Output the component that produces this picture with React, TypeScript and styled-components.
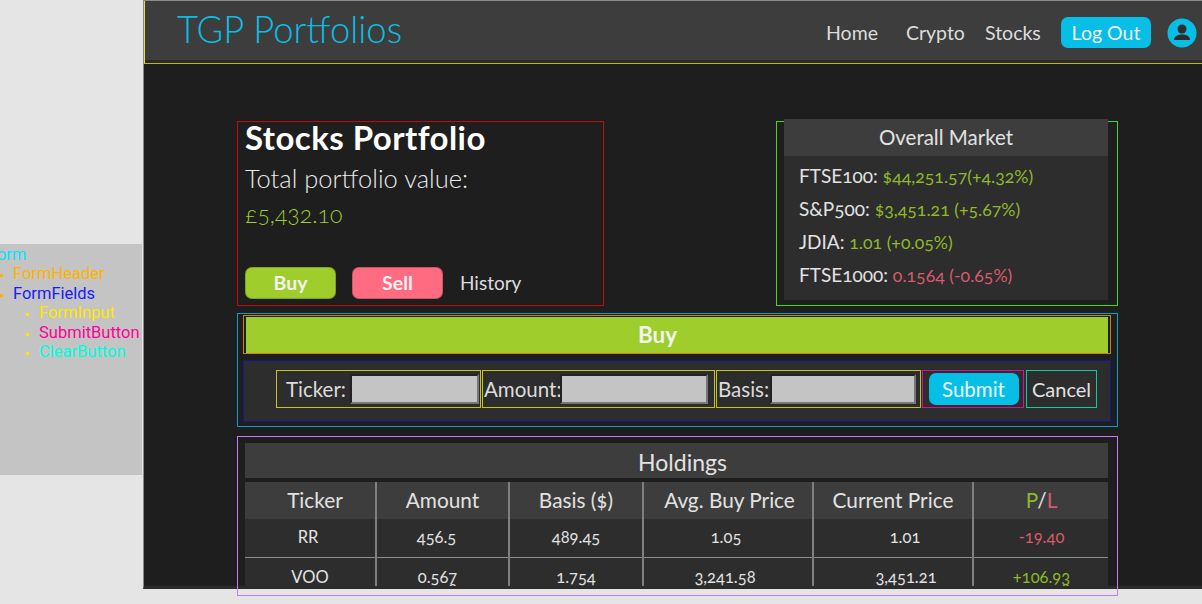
import React from "react";
import styled, { createGlobalStyle } from "styled-components";

const GREEN = "#9fce2c";
const RED = "#ff6b81";
const BLUE = "#07bfe6";
const FONT = `Lato, "Open Sans", sans-serif`;

const GlobalStyle = createGlobalStyle`
  html, body {
    margin: 0;
    padding: 0;
    height: 604px;
    overflow: hidden;
    background: #e5e5e5;
  }
`;

const Page = styled.div`
  display: flex;
  align-items: flex-start;
  width: 1202px;
  height: 604px;
  overflow: hidden;
  font-family: ${FONT};
  font-variant-numeric: oldstyle-nums;
  color: #e8e8e8;
`;

const Legend = styled.aside`
  flex: 0 0 142px;
  height: 231px;
  box-sizing: border-box;
  margin-top: 244px;
  margin-right: 1px;
  padding-top: 1px;
  background: #c4c4c4;
  overflow: hidden;
  font-family: Roboto, sans-serif;
  font-size: 16.5px;
  line-height: 19.4px;
`;

const LegendRoot = styled.div<{ $color: string }>`
  margin-left: -12px;
  color: ${(p) => p.$color};
`;

const LegendList = styled.ul<{ $indent: number }>`
  margin: 0;
  padding: 0 0 0 ${(p) => p.$indent}px;
  list-style: square;
`;

const LegendItem = styled.li<{ $color: string; $marker: string }>`
  color: ${(p) => p.$color};
  &::marker {
    color: ${(p) => p.$marker};
    font-size: 10px;
  }
`;

const Window = styled.div`
  flex: 0 0 1059px;
  height: 589px;
  box-sizing: border-box;
  background: #1e1e1e;
  border-left: 1px solid #8a8a8a;
  border-top: 1px solid #8a8a8a;
  border-bottom: 3px solid #2b2b2b;
`;

const NavBar = styled.header`
  display: flex;
  align-items: center;
  height: 63px;
  box-sizing: border-box;
  padding-left: 32px;
  background: #3d3d3d;
  border-left: 1px solid #e0e04a;
  border-bottom: 1px solid #b8b820;
  box-shadow: inset 0 -3px 0 #2b2b2b;
`;

const Logo = styled.h1`
  flex: 1;
  margin: -6px 0 0;
  font-size: 36.4px;
  font-weight: 300;
  color: ${BLUE};
`;

const NavLink = styled.a<{ $width: number }>`
  width: ${(p) => p.$width}px;
  font-size: 19.5px;
  color: #dcdcdc;
`;

const LogOutButton = styled.button`
  width: 90px;
  height: 31px;
  margin: 0 16px 0 0;
  padding: 0;
  border: 0;
  border-radius: 7px;
  background: ${BLUE};
  color: #f0f0f0;
  font-family: ${FONT};
  font-size: 19.5px;
`;

const AvatarBox = styled.svg`
  width: 30px;
  height: 30px;
  margin: 2px 5px 0 0;
`;

const Main = styled.main`
  display: flex;
  flex-direction: column;
  width: 881px;
  margin: 57px 0 0 93px;
`;

const TopRow = styled.div`
  display: flex;
  justify-content: space-between;
  height: 185px;
  margin-bottom: 7px;
`;

const SummaryPanel = styled.section`
  width: 367px;
  box-sizing: border-box;
  padding: 0 7px;
  border: 1px solid #c00c0c;
`;

const Title = styled.h2`
  margin: -1px 0 0;
  font-size: 33px;
  letter-spacing: 0.45px;
  line-height: 32px;
  font-weight: 700;
  color: #fff;
`;

const TotalLabel = styled.div`
  margin-top: 9px;
  font-size: 25.5px;
  font-weight: 300;
  line-height: 32px;
  color: #eaeaea;
`;

const TotalValue = styled.div`
  margin-top: 4px;
  font-size: 23px;
  font-weight: 300;
  line-height: 32px;
  color: ${GREEN};
`;

const ActionRow = styled.div`
  display: flex;
  align-items: center;
  margin-top: 37px;
`;

const ActionButton = styled.button<{ $bg: string }>`
  width: 91px;
  height: 32px;
  margin-right: 16px;
  padding: 0 0 2px;
  border: 1px solid rgba(0, 0, 0, 0.2);
  border-radius: 7px;
  background: ${(p) => p.$bg};
  color: #f2f2f2;
  font-family: ${FONT};
  font-size: 19.5px;
  font-weight: 700;
`;

const HistoryLink = styled.a`
  margin: -1px 0 0 1px;
  font-size: 19px;
  color: #dcdcdc;
`;

const MarketOutline = styled.section`
  width: 342px;
  box-sizing: border-box;
  padding: 0 9px 4px 7px;
  border: 1px solid #3fdc10;
`;

const MarketCard = styled.div`
  height: 181px;
  margin-top: -3px;
  background: #2d2d2d;
`;

const CardHeading = styled.div<{ $height: number; $line: number; $size: number; $indent?: number }>`
  height: ${(p) => p.$height}px;
  padding-left: ${(p) => p.$indent ?? 0}px;
  line-height: ${(p) => p.$line}px;
  background: #3d3d3d;
  text-align: center;
  font-size: ${(p) => p.$size}px;
  color: #e2e2e2;
`;

const MarketList = styled.div`
  padding: 3px 0 0 15px;
`;

const MarketRow = styled.div`
  height: 33px;
  line-height: 33px;
  font-size: 19px;
  color: #e2e2e2;
`;

const Gain = styled.span`
  color: #8fb82a;
`;

const Loss = styled.span`
  color: #d95a6d;
`;

const MarketGain = styled(Gain)`
  font-size: 17.7px;
`;

const MarketLoss = styled(Loss)`
  font-size: 17.7px;
`;

const FormOutline = styled.section`
  height: 114px;
  box-sizing: border-box;
  padding: 1px 6px 4px 5px;
  border: 1px solid #0a9fc9;
`;

const FormHeader = styled.div`
  box-sizing: border-box;
  height: 39px;
  margin-bottom: 6px;
  border: 1px solid #c9850a;
  padding: 1px 2px 0;
`;

const FormTitle = styled.div`
  height: 36px;
  padding-right: 39px;
  line-height: 36px;
  background: ${GREEN};
  text-align: center;
  font-size: 22.5px;
  font-weight: 700;
  color: #f2f2f2;
`;

const FormFields = styled.div`
  display: flex;
  align-items: flex-start;
  height: 62px;
  box-sizing: border-box;
  padding: 9px 0 0 32px;
  gap: 1px;
  border: 1px solid #15159c;
  background: #2d2d2d;
`;

const FormInput = styled.label<{ $width: number; $pad: number }>`
  display: flex;
  align-items: center;
  width: ${(p) => p.$width}px;
  height: 38px;
  box-sizing: border-box;
  padding-left: ${(p) => p.$pad}px;
  border: 1px solid #c4c41a;
  font-size: 20.5px;
  color: #dcdcdc;
`;

const TextBox = styled.input<{ $width: number; $gap: number }>`
  width: ${(p) => p.$width}px;
  height: 30px;
  box-sizing: border-box;
  margin-left: ${(p) => p.$gap}px;
  padding: 0;
  background: #c4c4c4;
  border: 2px inset #777;
`;

const SubmitBox = styled.div`
  display: flex;
  align-items: center;
  justify-content: center;
  width: 102px;
  height: 38px;
  box-sizing: border-box;
  padding-left: 1px;
  border: 1px solid #d40fa6;
`;

const SubmitButton = styled.button`
  width: 90px;
  height: 32px;
  padding: 0;
  border: 0;
  border-radius: 7px;
  background: ${BLUE};
  color: #eaf8fc;
  font-family: ${FONT};
  font-size: 20.5px;
`;

const ClearButton = styled.button`
  width: 71px;
  height: 38px;
  margin-left: 1px;
  padding: 0;
  box-sizing: border-box;
  background: transparent;
  border: 1px solid #10c99c;
  color: #e2e2e2;
  font-family: ${FONT};
  font-size: 20px;
`;

const HoldingsOutline = styled.section`
  height: 160px;
  box-sizing: border-box;
  margin-top: 9px;
  padding: 6px 9px 0 7px;
  border: 1px solid #c07ff0;
`;

const TableClip = styled.div`
  height: 108px;
  overflow: hidden;
`;

const Holdings = styled.table`
  width: 864px;
  margin-top: 4px;
  border-collapse: collapse;
  table-layout: fixed;
  text-align: center;
  color: #e2e2e2;
`;

const HeadCell = styled.th<{ $width: number; $shift?: number }>`
  width: ${(p) => p.$width}px;
  height: 35px;
  padding: 0 0 2px ${(p) => p.$shift ?? 0}px;
  background: #3d3d3d;
  font-size: 20.8px;
  font-weight: 400;
  &:not(:last-child) {
    border-right: 2px solid #7f7f7f;
  }
`;

const Row = styled.tr`
  height: 38px;
  background: #2d2d2d;
  border-bottom: 1px solid #8c8c8c;
`;

const CutRow = styled.tr`
  background: #2d2d2d;
`;

const Cell = styled.td<{ $right?: number; $left?: number }>`
  padding: 0 ${(p) => p.$right ?? 0}px 2px ${(p) => p.$left ?? 0}px;
  font-size: 16.5px;
  &:not(:last-child) {
    border-right: 2px solid #7f7f7f;
  }
`;

const CutCell = styled(Cell)`
  padding-top: 13px;
  padding-bottom: 0;
  vertical-align: top;
  line-height: 13px;
`;

const CutLine = styled.div`
  line-height: 13px;
`;

const FORM_FIELDS = [
  { label: "Ticker:", width: 205, pad: 9, box: 129, gap: 4 },
  { label: "Amount:", width: 233, pad: 1, box: 148, gap: -2 },
  { label: "Basis:", width: 205, pad: 1, box: 146, gap: 1 },
];

const COLUMNS = [
  { label: "Ticker", width: 120, shift: 10 },
  { label: "Amount", width: 131, shift: 0 },
  { label: "Basis ($)", width: 132, shift: 0 },
  { label: "Avg. Buy Price", width: 165, shift: 3 },
  { label: "Current Price", width: 158, shift: 0 },
];

const App: React.FC = () => {
  return (
    <Page>
      <GlobalStyle />
      <Legend>
        <LegendRoot $color="#00e5ff">Form</LegendRoot>
        <LegendList $indent={13}>
          <LegendItem $color="#ffb300" $marker="#ffb300">FormHeader</LegendItem>
          <LegendItem $color="#1a1aff" $marker="#ffb300">FormFields</LegendItem>
        </LegendList>
        <LegendList $indent={39}>
          <LegendItem $color="#ffe600" $marker="#ffe600">FormInput</LegendItem>
          <LegendItem $color="#ff0099" $marker="#ffe600">SubmitButton</LegendItem>
          <LegendItem $color="#00ffdd" $marker="#ffe600">ClearButton</LegendItem>
        </LegendList>
      </Legend>

      <Window>
        <NavBar>
          <Logo>TGP Portfolios</Logo>
          <NavLink $width={80}>Home</NavLink>
          <NavLink $width={79}>Crypto</NavLink>
          <NavLink $width={76}>Stocks</NavLink>
          <LogOutButton>Log Out</LogOutButton>
          <AvatarBox viewBox="0 0 30 30">
            <circle cx="15" cy="15" r="14.5" fill={BLUE} />
            <circle cx="15" cy="11" r="4.5" fill="#2d2d2d" />
            <path d="M7 22c0-4 4-5.500 8-5.500s8 1.500 8 5.500z" fill="#2d2d2d" />
          </AvatarBox>
        </NavBar>

        <Main>
          <TopRow>
            <SummaryPanel>
              <Title>Stocks Portfolio</Title>
              <TotalLabel>Total portfolio value:</TotalLabel>
              <TotalValue>£5,432.10</TotalValue>
              <ActionRow>
                <ActionButton $bg={GREEN}>Buy</ActionButton>
                <ActionButton $bg={RED}>Sell</ActionButton>
                <HistoryLink>History</HistoryLink>
              </ActionRow>
            </SummaryPanel>

            <MarketOutline>
              <MarketCard>
                <CardHeading $height={37} $line={37} $size={20.5}>Overall Market</CardHeading>
                <MarketList>
                  <MarketRow>FTSE100: <MarketGain>$44,251.57(+4.32%)</MarketGain></MarketRow>
                  <MarketRow>S&amp;P500: <MarketGain>$3,451.21 (+5.67%)</MarketGain></MarketRow>
                  <MarketRow>JDIA: <MarketGain>1.01 (+0.05%)</MarketGain></MarketRow>
                  <MarketRow>FTSE1000: <MarketLoss>0.1564 (-0.65%)</MarketLoss></MarketRow>
                </MarketList>
              </MarketCard>
            </MarketOutline>
          </TopRow>

          <FormOutline>
            <FormHeader>
              <FormTitle>Buy</FormTitle>
            </FormHeader>
            <FormFields>
              {FORM_FIELDS.map((field) => (
                <FormInput key={field.label} $width={field.width} $pad={field.pad}>
                  {field.label}
                  <TextBox $width={field.box} $gap={field.gap} />
                </FormInput>
              ))}
              <SubmitBox>
                <SubmitButton>Submit</SubmitButton>
              </SubmitBox>
              <ClearButton>Cancel</ClearButton>
            </FormFields>
          </FormOutline>

          <HoldingsOutline>
            <CardHeading $height={35} $line={39} $size={23} $indent={12}>Holdings</CardHeading>
            <TableClip>
              <Holdings>
                <thead>
                  <tr>
                    {COLUMNS.map((col) => (
                      <HeadCell key={col.label} $width={col.width} $shift={col.shift}>
                        {col.label}
                      </HeadCell>
                    ))}
                    <HeadCell $width={135}>
                      <Gain>P</Gain>/<Loss>L</Loss>
                    </HeadCell>
                  </tr>
                </thead>
                <tbody>
                  <Row>
                    <Cell $right={4}>RR</Cell>
                    <Cell $right={12}>456.5</Cell>
                    <Cell>489.45</Cell>
                    <Cell $right={4}>1.05</Cell>
                    <Cell $left={24}>1.01</Cell>
                    <Cell><Loss>-19.40</Loss></Cell>
                  </Row>
                  <CutRow>
                    <CutCell>VOO</CutCell>
                    <CutCell $right={10}>0.567<CutLine>0.348</CutLine></CutCell>
                    <CutCell>1.754</CutCell>
                    <CutCell $right={6}>3,241.58<CutLine>10,519.44</CutLine></CutCell>
                    <CutCell $left={26}>3,451.21</CutCell>
                    <CutCell><Gain>+106.93<CutLine>+104.48</CutLine></Gain></CutCell>
                  </CutRow>
                </tbody>
              </Holdings>
            </TableClip>
          </HoldingsOutline>
        </Main>
      </Window>
    </Page>
  );
};

export default App;
